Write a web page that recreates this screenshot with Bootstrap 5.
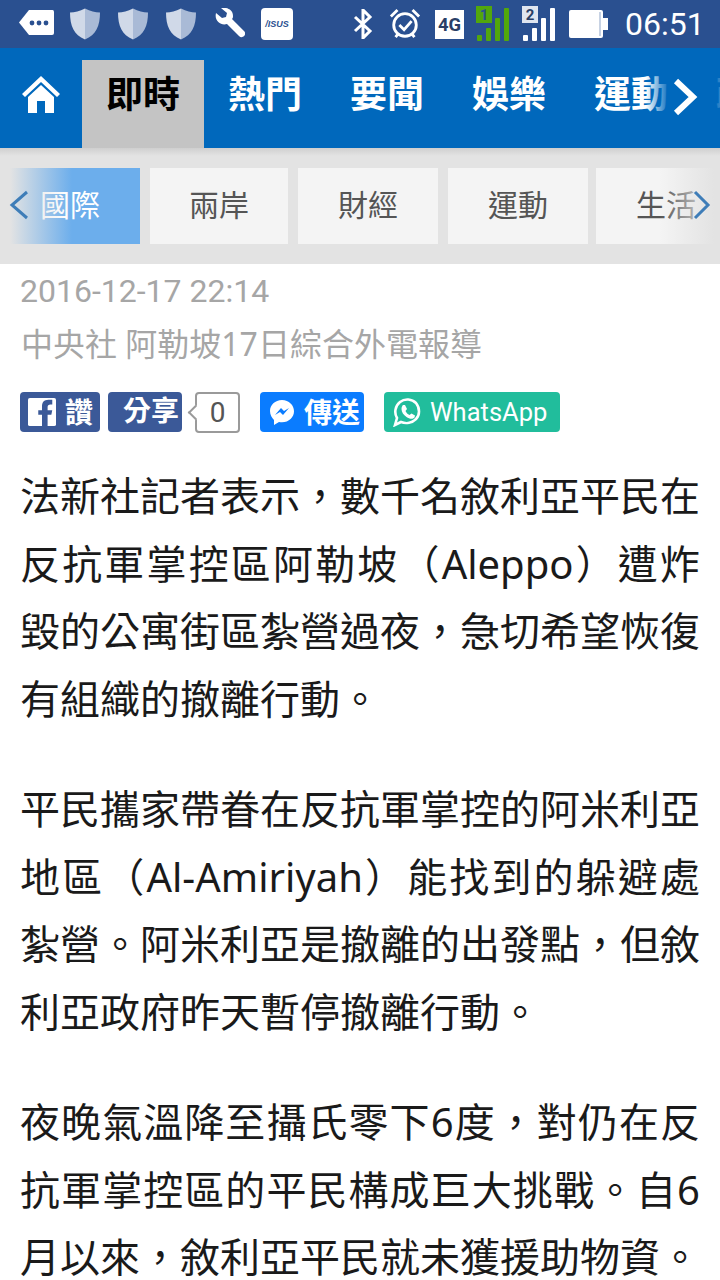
<!DOCTYPE html>
<html lang="zh-Hant">

<head>
    <meta charset="UTF-8" />
    <meta name="viewport" content="width=device-width, initial-scale=1" />
    <title>即時新聞</title>
    <link href="https://cdn.jsdelivr.net/npm/bootstrap@5.3.3/dist/css/bootstrap.min.css" rel="stylesheet" />
    <style>
        body {
            font-family: "Noto Sans", "Noto Sans CJK TC", sans-serif;
            background: #fff;
            width: 720px;
            height: 1280px;
            overflow: hidden;
        }

        /* status bar */
        .status-row {
            height: 48px;
            background: #2a5090;
            padding-left: 19px;
        }

        .status-row svg {
            flex: none;
            display: block;
        }

        .gap-shield { margin-left: 18px; }
        .gap-first { margin-left: 16px; }
        .gap-wrench { margin-left: 17px; }
        .gap-asus { margin-left: 16px; }
        .gap-bt { margin-left: 60px; }
        .gap-alarm { margin-left: 16px; }
        .gap-4g { margin-left: 14px; }
        .gap-sim1 { margin-left: 11px; }
        .gap-sim2 { margin-left: 10px; }
        .gap-batt { margin-left: 12px; }

        .status-time {
            font: 32px/1 Roboto, sans-serif;
            color: #fff;
            margin-left: 16px;
        }

        /* main tabs */
        .main-nav {
            height: 100px;
            background: #0068bc;
            padding-top: 12px;
            overflow: hidden;
        }

        .home-cell {
            width: 82px;
            flex: none;
            padding: 15px 0 0 22px;
        }

        .main-tab {
            width: 122px;
            flex: none;
            height: 88px;
            padding-top: 15px;
            text-align: center;
            font-size: 37px;
            line-height: 1;
            font-weight: 700;
            color: #fff;
        }

        .main-tab.is-on {
            background: #c4c4c4;
            color: #000;
        }

        .main-fade {
            right: 0;
            top: 0;
            bottom: 0;
            width: 74px;
            background: linear-gradient(to right, rgba(0, 104, 188, 0), #0068bc 32%, #0068bc 88%, rgba(0, 104, 188, .8));
        }

        .main-arrow {
            right: 22px;
            top: 30px;
        }

        /* sub tabs */
        .sub-nav {
            height: 116px;
            background: #e3e3e3;
            padding-top: 20px;
            overflow: hidden;
        }

        .sub-nav::before {
            content: "";
            position: absolute;
            left: 0;
            right: 0;
            top: 0;
            height: 8px;
            background: linear-gradient(to bottom, #cfcfcf, #e3e3e3);
        }

        .sub-tab {
            flex: none;
            width: 140px;
            height: 76px;
            margin-right: 10px;
            background: #f4f4f4;
            color: #555;
            font-size: 30px;
            line-height: 74px;
            text-align: center;
        }

        .sub-tab.is-on {
            background: #6caeec;
            color: #fff;
        }

        .sub-tab.is-narrow {
            width: 138px;
        }

        .sub-tab.is-tight {
            margin-left: -2px;
        }

        .sub-fade-left {
            left: 0;
            top: 20px;
            width: 72px;
            height: 76px;
            background: linear-gradient(to right, #e3e3e3 14%, rgba(227, 227, 227, 0));
        }

        .sub-fade-right {
            right: 0;
            top: 20px;
            width: 60px;
            height: 76px;
            background: linear-gradient(to right, rgba(227, 227, 227, 0), #e3e3e3 90%);
        }

        .sub-arrow-left {
            left: 9px;
            top: 42px;
        }

        .sub-arrow-right {
            right: 9px;
            top: 42px;
        }

        /* article */
        .meta-date {
            margin: 10px 0 0 20px;
            font: 32px/34px Roboto, sans-serif;
            color: #a6a6a6;
        }

        .meta-source {
            margin: 19px 0 0 21px;
            font-size: 32px;
            line-height: 34px;
            color: #a6a6a6;
        }

        .share-row {
            margin: 31px 0 0 20px;
            height: 41px;
        }

        .share-btn {
            height: 40px;
            border-radius: 4px;
            color: #fff;
            font-size: 28px;
            line-height: 36px;
            font-weight: 700;
            flex: none;
        }

        .btn-like {
            width: 80px;
            background: #3b5998;
            padding-left: 8px;
            gap: 9px;
        }

        .btn-share {
            width: 74px;
            margin-left: 8px;
            background: #3b5998;
            padding-left: 15px;
        }

        .share-count {
            width: 45px;
            height: 41px;
            margin-left: 13px;
            border: 2px solid #9a9a9a;
            border-radius: 4px;
            background: #fff;
            color: #555;
            font: 28px/37px Roboto, sans-serif;
            text-align: center;
            flex: none;
        }

        .share-count::before {
            content: "";
            position: absolute;
            left: -7px;
            top: 13px;
            width: 11px;
            height: 11px;
            background: #fff;
            border-left: 2px solid #9a9a9a;
            border-bottom: 2px solid #9a9a9a;
            transform: rotate(45deg);
        }

        .btn-send {
            width: 104px;
            margin-left: 20px;
            background: #0a7cff;
            padding-left: 9px;
            gap: 9px;
        }

        .btn-whatsapp {
            width: 176px;
            margin-left: 20px;
            background: #21bd9c;
            padding-left: 9px;
            gap: 8px;
            font: 25.5px/36px Roboto, sans-serif;
        }

        .story {
            margin: 29px 20px 0;
            width: 680px;
        }

        .story p {
            margin: 0 0 43px;
            font-size: 40px;
            line-height: 67.5px;
            color: #1a1a1a;
            text-align: justify;
            text-align-last: justify;
        }

        .story p .last-line {
            display: block;
            text-align-last: left;
        }
    </style>
</head>

<body>
    <!-- status bar -->
    <div class="status-row d-flex align-items-center">
        <svg width="35" height="28" viewBox="0 0 35 28">
            <path d="M10 1h23a2 2 0 0 1 2 2v22a2 2 0 0 1-2 2H10L0 14z" transform="translate(0 -1) scale(1 .96)" fill="#fff" />
            <circle cx="13" cy="13" r="2.4" fill="#2a5090" />
            <circle cx="20" cy="13" r="2.4" fill="#2a5090" />
            <circle cx="27" cy="13" r="2.4" fill="#2a5090" />
        </svg>
        <svg class="gap-first" width="30" height="32" viewBox="0 0 31 32">
            <path d="M15.5 0C10 3 5 4 0 4c0 14 4 23 15.5 28z" fill="#d0d9e8" />
            <path d="M15.5 0C21 3 26 4 31 4c0 14-4 23-15.5 28z" fill="#a9bad6" />
        </svg>
        <svg class="gap-shield" width="30" height="32" viewBox="0 0 31 32">
            <path d="M15.5 0C10 3 5 4 0 4c0 14 4 23 15.5 28z" fill="#d0d9e8" />
            <path d="M15.5 0C21 3 26 4 31 4c0 14-4 23-15.5 28z" fill="#a9bad6" />
        </svg>
        <svg class="gap-shield" width="30" height="32" viewBox="0 0 31 32">
            <path d="M15.5 0C10 3 5 4 0 4c0 14 4 23 15.5 28z" fill="#d0d9e8" />
            <path d="M15.5 0C21 3 26 4 31 4c0 14-4 23-15.5 28z" fill="#a9bad6" />
        </svg>
        <svg class="gap-wrench" width="32" height="32" viewBox="0 0 32 32">
            <path d="M3 5l6 5 4-1 1-4-6-5c5-1 12 1 12 8 0 1 0 2-1 3l12 12c2 2 1 4 0 5s-3 2-5 0L14 16c-6 2-13-3-11-11z" fill="#fff" />
        </svg>
        <svg class="gap-asus" width="32" height="32" viewBox="0 0 32 32">
            <rect width="32" height="32" rx="4" fill="#fff" />
            <text x="16" y="19" font-family="Liberation Sans" font-style="italic" font-weight="700" font-size="9" fill="#2a5090" text-anchor="middle">/ISUS</text>
        </svg>
        <svg class="gap-bt" width="20" height="30" viewBox="0 0 20 30">
            <path d="M2 8l15 14-7 7V1l7 7L2 22" fill="none" stroke="#fff" stroke-width="3" />
        </svg>
        <svg class="gap-alarm" width="32" height="34" viewBox="0 0 34 34">
            <circle cx="17" cy="18" r="12" fill="none" stroke="#fff" stroke-width="3" />
            <path d="M11 18l5 5 8-9" fill="none" stroke="#fff" stroke-width="3" />
            <path d="M2 9l7-7M32 9l-7-7M7 31l3-4M27 31l-3-4" stroke="#fff" stroke-width="3" fill="none" />
        </svg>
        <svg class="gap-4g" width="29" height="29" viewBox="0 0 30 30">
            <rect width="30" height="30" fill="#fff" />
            <text x="15" y="22" font-family="Roboto" font-weight="700" font-size="19" fill="#2a3f66" text-anchor="middle">4G</text>
        </svg>
        <svg class="gap-sim1" width="36" height="36" viewBox="0 0 36 36">
            <rect x="1" y="0" width="16" height="17" fill="#52a70c" />
            <text x="9" y="14" font-family="Roboto" font-weight="700" font-size="15" fill="#2a5090" text-anchor="middle">1</text>
            <rect x="2" y="29" width="5" height="6" rx="1" fill="#52a70c" />
            <rect x="11" y="22" width="5" height="13" rx="1" fill="#52a70c" />
            <rect x="20" y="12" width="5" height="23" rx="1" fill="#52a70c" />
            <rect x="29" y="2" width="5" height="33" rx="1" fill="#52a70c" />
        </svg>
        <svg class="gap-sim2" width="36" height="36" viewBox="0 0 36 36">
            <rect x="1" y="0" width="16" height="17" fill="#dfe5ef" />
            <text x="9" y="14" font-family="Roboto" font-weight="700" font-size="15" fill="#2a3f66" text-anchor="middle">2</text>
            <rect x="2" y="29" width="5" height="6" rx="1" fill="#fff" />
            <rect x="11" y="22" width="5" height="13" rx="1" fill="#fff" />
            <rect x="20" y="12" width="5" height="23" rx="1" fill="#fff" />
            <rect x="29" y="2" width="5" height="33" rx="1" fill="#fff" />
        </svg>
        <svg class="gap-batt" width="40" height="28" viewBox="0 0 40 28">
            <rect x="0" y="0" width="34" height="28" rx="2" fill="#fff" />
            <rect x="30" y="2" width="2" height="24" fill="#c7d2e3" />
            <rect x="34" y="8" width="5" height="12" fill="#fff" />
        </svg>
        <span class="status-time">06:51</span>
    </div>

    <!-- main tabs -->
    <div class="main-nav d-flex position-relative">
        <div class="home-cell">
            <svg class="d-block" width="38" height="38" viewBox="0 0 38 38">
                <path d="M0 19L19 1l19 18-3 3L19 7 3 22z" fill="#fff" />
                <path d="M6 22L19 10l13 12v16H23V26h-8v12H6z" fill="#fff" />
            </svg>
        </div>
        <div class="main-tab is-on">即時</div>
        <div class="main-tab">熱門</div>
        <div class="main-tab">要聞</div>
        <div class="main-tab">娛樂</div>
        <div class="main-tab">運動</div>
        <div class="main-tab">政治</div>
        <div class="main-fade position-absolute"></div>
        <svg class="main-arrow position-absolute" width="26" height="38" viewBox="0 0 26 38">
            <path d="M4 3l17 16L4 35" fill="none" stroke="#fff" stroke-width="6" />
        </svg>
    </div>

    <!-- sub tabs -->
    <div class="sub-nav d-flex position-relative">
        <div class="sub-tab is-on">國際</div>
        <div class="sub-tab is-narrow">兩岸</div>
        <div class="sub-tab">財經</div>
        <div class="sub-tab">運動</div>
        <div class="sub-tab is-tight">生活</div>
        <div class="sub-fade-left position-absolute"></div>
        <div class="sub-fade-right position-absolute"></div>
        <svg class="sub-arrow-left position-absolute" width="20" height="30" viewBox="0 0 20 30">
            <path d="M18 2L3 15l15 13" fill="none" stroke="#3e7db8" stroke-width="3" />
        </svg>
        <svg class="sub-arrow-right position-absolute" width="18" height="30" viewBox="0 0 18 30">
            <path d="M2 2l13 13L2 28" fill="none" stroke="#3e7db8" stroke-width="3" />
        </svg>
    </div>

    <!-- article -->
    <div class="meta-date">2016-12-17 22:14</div>
    <div class="meta-source">中央社 阿勒坡17日綜合外電報導</div>

    <div class="share-row d-flex align-items-start">
        <div class="share-btn btn-like d-flex align-items-center">
            <svg width="28" height="30" viewBox="0 0 30 30">
                <rect width="30" height="30" rx="2" fill="#fff" />
                <path d="M21 30V18h4l1-5h-5V10c0-2 1-3 3-3h2V2h-4c-5 0-7 3-7 7v4h-4v5h4v12z" fill="#3b5998" />
            </svg>
            <span>讚</span>
        </div>
        <div class="share-btn btn-share">分享</div>
        <div class="share-count position-relative">0</div>
        <div class="share-btn btn-send d-flex align-items-center">
            <svg width="26" height="28" viewBox="0 0 26 28">
                <path d="M13 2C6 2 1 7 1 13c0 4 2 7 4 9v5l5-3c1 .3 2 .3 3 .3 7 0 12-5 12-11S20 2 13 2z" fill="#fff" />
                <path d="M6 17l6-7 3 3 5-3-6 7-3-3z" fill="#0a7cff" />
            </svg>
            <span>傳送</span>
        </div>
        <div class="share-btn btn-whatsapp d-flex align-items-center fw-normal">
            <svg width="29" height="30" viewBox="0 0 29 30">
                <path d="M2 28l2-7C1 16 2 9 7 5c5-4 12-3 16 1 4 5 4 12 0 16-4 4-10 5-15 3z" fill="none" stroke="#fff" stroke-width="2.6" />
                <path d="M10 8l2 0 2 4-1.500 2c1 2 2 3 4 4l2-1.500 3.500 2-.5 2c-2 2-5 1.500-8-.5-3-2-5-5-5-8 0-2 1-3.500 1.500-4z" fill="#fff" />
            </svg>
            <span>WhatsApp</span>
        </div>
    </div>

    <div class="story">
        <p>法新社記者表示&#xFF0C;數千名敘利亞平民在反抗軍掌控區阿勒坡&#xFF08;Aleppo&#xFF09;遭炸毀的公寓街區紮營過夜&#xFF0C;急切希望恢復<span class="last-line">有組織的撤離行動。</span></p>
        <p>平民攜家帶眷在反抗軍掌控的阿米利亞地區&#xFF08;Al-Amiriyah&#xFF09;能找到的躲避處紮營。阿米利亞是撤離的出發點&#xFF0C;但敘<span class="last-line">利亞政府昨天暫停撤離行動。</span></p>
        <p>夜晚氣溫降至攝氏零下6度&#xFF0C;對仍在反抗軍掌控區的平民構成巨大挑戰。自6月以來&#xFF0C;敘利亞平民就未獲援助物資。</p>
    </div>

    <script src="https://cdn.jsdelivr.net/npm/bootstrap@5.3.3/dist/js/bootstrap.bundle.min.js"></script>
</body>

</html>
